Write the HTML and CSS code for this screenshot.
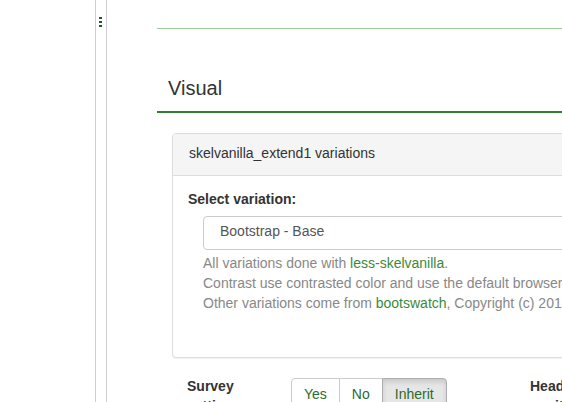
FILE: index.html
```html
<!DOCTYPE html>
<html>
<head>
<meta charset="utf-8">
<link rel="stylesheet" href="styles.css">
</head>
<body>
<div class="layout">
  <aside class="sidebar"></aside>
  <div class="handle">
    <span class="dot"></span><span class="dot"></span><span class="dot"></span>
  </div>
  <main class="content">
    <div class="prev-section"></div>
    <h3 class="section-title">Visual</h3>
    <div class="panel">
      <div class="panel-heading">skelvanilla_extend1 variations</div>
      <div class="panel-body">
        <label class="field-label">Select variation:</label>
        <div class="field">
          <div class="select">Bootstrap - Base</div>
          <div class="help">
            <div>All variations done with <a href="#">less-skelvanilla</a>.</div>
            <div>Contrast use contrasted color and use the default browser font.</div>
            <div>Other variations come from <a href="#">bootswatch</a>, Copyright (c) 2013 Thomas Park.</div>
          </div>
        </div>
      </div>
    </div>
    <div class="option-row">
      <div class="opt-label">Survey settings</div>
      <div class="btn-group">
        <span class="btn">Yes</span><span class="btn">No</span><span class="btn active">Inherit</span>
      </div>
      <div class="opt-label">Headline position</div>
    </div>
  </main>
</div>
</body>
</html>
```
FILE: styles.css
```css
html, body {
  margin: 0;
  padding: 0;
  background: #fff;
  overflow: hidden;
  height: 402px;
}
body {
  font-family: "Liberation Sans", Arial, sans-serif;
  font-size: 14px;
  line-height: 20px;
  color: #333;
}
.layout {
  display: flex;
  height: 402px;
}
.sidebar {
  flex: none;
  width: 95px;
  border-right: 1px solid #cfcfcf;
}
.handle {
  flex: none;
  box-sizing: border-box;
  width: 11px;
  border-right: 1px solid #cfcfcf;
  display: flex;
  flex-direction: column;
  gap: 2px;
  padding: 17px 0 0 3px;
}
.dot {
  display: block;
  width: 3px;
  height: 2px;
  background: #1f5a23;
}
.content {
  flex: none;
  width: 760px;
  padding-left: 50px;
}
.prev-section {
  height: 28px;
  border-bottom: 1px solid #9dc79d;
}
.section-title {
  margin: 47px 0 0 0;
  padding: 0 0 11px 11px;
  font-size: 20px;
  line-height: 24px;
  font-weight: normal;
  color: #333;
  border-bottom: 2px solid #2f8133;
}
.panel {
  margin: 20px 0 18px 15px;
  border: 1px solid #ddd;
  border-radius: 4px;
  box-shadow: 0 1px 1px rgba(0,0,0,0.05);
  background: #fff;
}
.panel-heading {
  background: #f5f5f5;
  border-bottom: 1px solid #ddd;
  border-radius: 3px 3px 0 0;
  padding: 9px 16px 12px;
  color: #333;
}
.panel-body {
  padding: 13px 15px 44px 15px;
}
.field-label {
  display: block;
  font-weight: bold;
  margin-bottom: 7px;
}
.field {
  padding-left: 15px;
}
.select {
  height: 34px;
  box-sizing: border-box;
  border: 1px solid #ccc;
  border-radius: 4px;
  padding: 4px 16px 8px;
  color: #555;
}
.help {
  margin-top: 3px;
  color: #888;
  white-space: nowrap;
}
.help a {
  color: #3a8a3a;
  text-decoration: none;
}
.option-row {
  display: grid;
  grid-template-columns: 104px 239px 90px;
  padding-left: 30px;
  align-items: start;
}
.opt-label {
  font-weight: bold;
  width: 70px;
}
.btn-group {
  display: flex;
  margin-top: 2px;
}
.btn {
  display: block;
  padding: 5px 12px 7px;
  border: 1px solid #ccc;
  color: #2c6b2c;
  background: #fff;
  margin-left: -1px;
}
.btn:first-child {
  margin-left: 0;
  border-radius: 4px 0 0 4px;
}
.btn:last-child {
  border-radius: 0 4px 4px 0;
}
.btn.active {
  background: #e6e6e6;
  border-color: #adadad;
  box-shadow: inset 0 3px 5px rgba(0,0,0,0.125);
}
```
